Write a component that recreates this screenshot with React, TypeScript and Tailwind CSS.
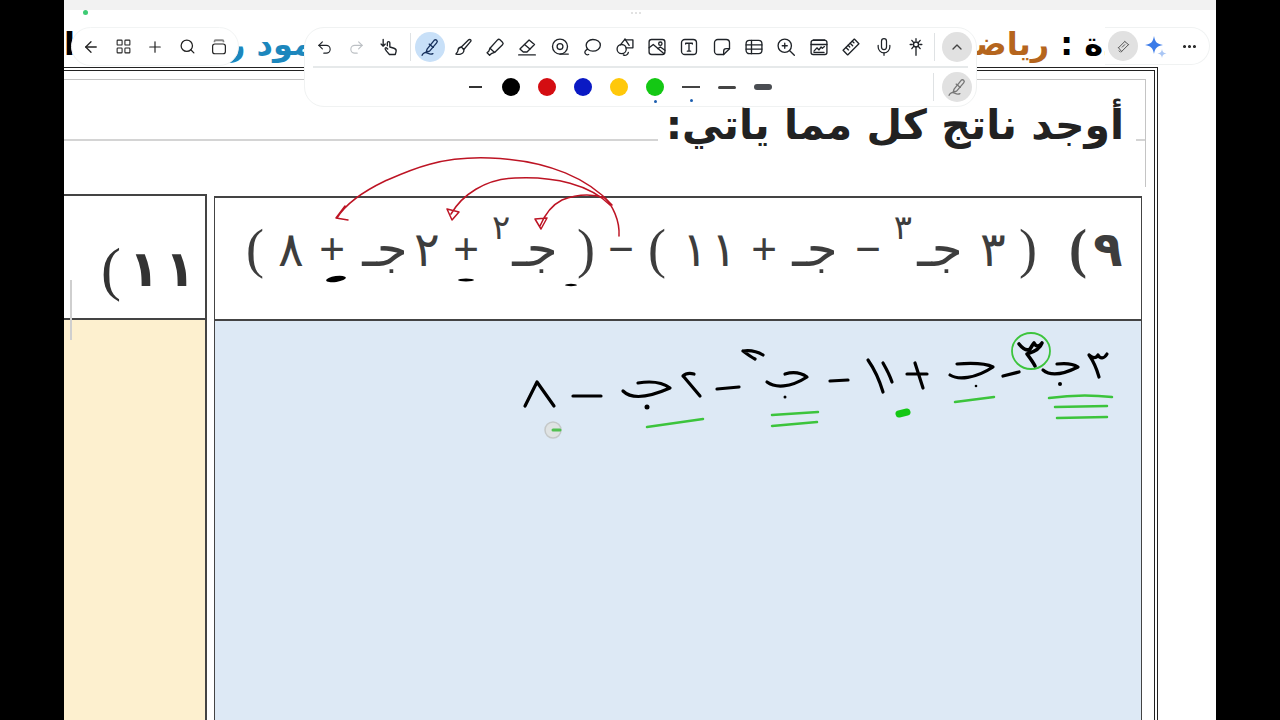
import React from "react";
import { ArrowLeft, ChevronUp, Ellipsis, LayoutGrid, Mic, Plus, Redo2, Search, Undo2 } from "lucide-react";

/**
 * Stroke icon in a 24 box, for the tools that no package has in this shape
 */
const Ico = ({ children, size = 20 }: { children: React.ReactNode; size?: number }) => (
  <svg width={size} height={size} viewBox="0 0 24 24" fill="none" stroke="currentColor" strokeWidth={1.6} strokeLinecap="round" strokeLinejoin="round">
    {children}
  </svg>
);

const PenInk = ({ size = 20 }: { size?: number }) => (
  <Ico size={size}>
    <path d="M8.5 14.5 17 4c1-1 2-1 3 0s1 2 0 3l-8.500 10-4 1z" />
    <path d="M11 8.500l5 4" />
    <path d="M2.500 22c1-3 4-4 6-3s4 2.500 7 1" />
  </Ico>
);

const toolIcons: React.ReactNode[] = [
  <Ico key="brush">
    <path d="M20 3c1 0 2 1 1.500 2L13 15l-3-3 8.500-8.500c.4-.4 1-.5 1.500-.5z" />
    <path d="M10 12c-3 .5-4 2-4 4s-1 3-2.500 4.500c3.500 1 8.500 0 9.300-3 .4-1.500.2-2.500-.3-2.500" />
  </Ico>,
  <Ico key="marker">
    <path d="M15 3.500c1-1 2-1 3-.1l3 2.800c1 1 1 2 0 3L11.500 18.500 6 13.500z" />
    <path d="M6 13.500 4.500 17l-2 2 3 3 2-2 4-1.500" />
  </Ico>,
  <Ico key="eraser">
    <path d="M14.500 3.500 21 9l-9 9H7.500L3.500 14.500z" />
    <path d="M9 9l6.500 5.500" />
    <path d="M2 21.500h20" />
  </Ico>,
  <Ico key="tape">
    <circle cx="12" cy="11.500" r="9" />
    <circle cx="12" cy="11.500" r="3.500" />
    <path d="M12 20.500h10" />
  </Ico>,
  <Ico key="lasso">
    <path d="M13 3c5 0 9 2.800 9 6.800S18 17 13 17c-4.500 0-8-3-8-7s3.500-7 8-7z" />
    <path d="M6.500 14.500C4 16 2.500 18 4 20c1 1.300 3 1.500 4 1" />
  </Ico>,
  <Ico key="shapes">
    <circle cx="8" cy="14.500" r="5.500" />
    <path d="M12 3.500h9.500V13H13" />
    <path d="M12 2.500 6.500 9.500" />
    <path d="M12 2.500l5 7.500" />
    <path d="M16 18.500a4 4 0 0 1-6 3" />
  </Ico>,
  <Ico key="image">
    <rect x="2.500" y="3" width="19" height="18" rx="3" />
    <circle cx="16" cy="8" r="2" />
    <path d="M2.500 13l5-4 13 11" />
    <path d="M13 14l3-2 5.500 4" />
  </Ico>,
  <Ico key="text">
    <rect x="3" y="3" width="18" height="18" rx="4" />
    <path d="M8 8.500V7.500h8v1M12 7.500V17M10 17h4" />
  </Ico>,
  <Ico key="note">
    <path d="M7 3h10a4 4 0 0 1 4 4v7l-7 7H7a4 4 0 0 1-4-4V7a4 4 0 0 1 4-4z" />
    <path d="M14 21v-4a3 3 0 0 1 3-3h4" />
  </Ico>,
  <Ico key="table">
    <rect x="2.500" y="4" width="19" height="16" rx="4" />
    <path d="M2.500 9.500h19M2.500 14.500h19M9 4v16" />
  </Ico>,
  <Ico key="zoom">
    <circle cx="10.500" cy="10.500" r="8" />
    <path d="M16.500 16.500 22 22M10.500 7.500v6M7.500 10.500h6" />
  </Ico>,
  <Ico key="chart">
    <rect x="2.500" y="4" width="19" height="17" rx="2.500" />
    <path d="M2.500 9h19" />
    <path d="M5 3.500h14" />
    <path d="M6 17l3.500-4 2.500 2.500 2.500-3.500 1.500 1.500 2.500-2" />
    <path d="M6 18.500h12" />
  </Ico>,
  <Ico key="ruler">
    <path d="M16 2.500 21.500 8 8 21.500 2.500 16z" />
    <path d="M13.500 5l2 2M11 7.500l3 3M8.500 10l2 2M6 12.500l3 3" />
  </Ico>,
  <Mic key="mic" size={20} strokeWidth={1.5} />,
  <Ico key="wand">
    <circle cx="12" cy="9" r="3" />
    <path d="M12 12v10M12 2v2.500M5 9h2.500M16.500 9H19M7 4l2 2.500M17 4l-2 2.500M7 14l2-2.500M17 14l-2-2.500" />
  </Ico>,
];

const colors = ["bg-black", "bg-[#d40d12]", "bg-[#0a19c4]", "bg-[#ffc80a]", "bg-[#14c814]"];

const paren = "font-['Liberation_Serif',serif] text-[54px]";
const digit = "text-[48px]";
const jeem = "text-[50px]";
const sign = "font-['Liberation_Sans',sans-serif] text-[44px] font-light";
const sup = "-translate-y-[22px] text-[34px]";

const mathCells = [
  { t: "(", w: "w-[36px]", c: paren },
  { t: "٨", w: "w-[36px]", c: digit },
  { t: "+", w: "w-[46px]", c: sign },
  { t: "جـ", w: "w-[60px]", c: jeem },
  { t: "٢", w: "w-[24px]", c: digit },
  { t: "+", w: "w-[54px]", c: sign },
  { t: "٢", w: "w-[16px]", c: sup },
  { t: "جـ", w: "w-[52px]", c: jeem },
  { t: ")", w: "w-[50px]", c: paren },
  { t: "−", w: "w-[20px]", c: sign },
  { t: "(", w: "w-[52px]", c: paren },
  { t: "١", w: "w-[24px]", c: digit },
  { t: "١", w: "w-[34px]", c: digit },
  { t: "+", w: "w-[46px]", c: sign },
  { t: "جـ", w: "w-[56px]", c: jeem },
  { t: "−", w: "w-[50px]", c: sign },
  { t: "٣", w: "w-[20px]", c: sup },
  { t: "جـ", w: "w-[54px]", c: jeem },
  { t: "٣", w: "w-[52px]", c: digit },
  { t: ")", w: "w-[18px]", c: paren },
  { t: "(", w: "ml-[23px] w-[36px]", c: `${paren} font-bold` },
  { t: "٩", w: "w-[24px]", c: `${digit} font-bold` },
];

// pen strokes written over the sheet, in page coordinates
const blackInk = [
  "M525 406 537 382 554 406",
  "M573 396H601",
  "M623 391C630 398 645 399 670 388C662 382 650 381 638 383",
  "M683 376C686 373 690 373 694 374M684 377 700 396",
  "M717 389 739 387",
  "M743 351C750 350 758 352 763 355M743 351C747 354 751 357 755 359",
  "M767 382C775 388 790 388 807 377C800 372 792 372 785 374",
  "M830 381 848 380",
  "M868 360C875 370 880 382 883 392M883 363C887 370 890 376 892 382",
  "M907 374H927M915 363 923 388",
  "M950 375C958 380 975 379 993 367C985 363 970 363 957 364",
  "M1003 376 1019 372",
  "M1043 370C1050 376 1062 375 1078 367C1072 363 1065 363 1057 364",
  "M1089 355C1092 358 1096 359 1098 355C1100 359 1104 359 1107 354M1089 355C1094 362 1097 370 1099 377",
];

const greenInk = [
  "M647 427 703 419",
  "M772 415 818 412",
  "M772 426 817 422",
  "M955 402 994 397",
  "M1049 398C1070 395 1095 395 1112 397",
  "M1055 407 1107 406",
  "M1057 418 1107 417",
];

const redInk = [
  "M612 205C590 180 550 160 490 158C440 156 410 170 385 181C360 193 345 205 337 218M345 206 336 218 348 220",
  "M610 205C590 185 555 176 515 178C485 179 462 195 451 214M447 209 452 220 459 212 447 209",
  "M619 236C620 220 612 205 605 198C590 193 575 195 562 200C552 205 545 214 540 226M535 219 541 229 547 218 535 219",
];

const HandInk = () => (
  <svg className="pointer-events-none absolute left-0 top-0" width={1152} height={720} viewBox="64 0 1152 720" fill="none" strokeLinecap="round" strokeLinejoin="round">
    <g stroke="#bd1424" strokeWidth={1.5}>
      {redInk.map((d) => <path key={d} d={d} />)}
    </g>
    <g stroke="#000" strokeWidth={3.2}>
      {blackInk.map((d) => <path key={d} d={d} />)}
      <path d="M1019 344C1023 349 1027 351 1030 349C1032 346 1033 344 1034 343C1036 347 1039 347 1042 343C1040 349 1034 352 1027 354C1030 358 1033 362 1035 366" strokeWidth={3.6} />
    </g>
    <g fill="#000" stroke="none">
      <circle cx={647} cy={407} r={2.5} />
      <circle cx={785} cy={397} r={1.5} />
      <circle cx={976} cy={386} r={1.3} />
      <circle cx={1060} cy={384} r={2} />
      <ellipse cx={336} cy={279} rx={10} ry={3} transform="rotate(-8 336 279)" />
      <ellipse cx={466} cy={280} rx={8} ry={1.5} />
      <ellipse cx={571} cy={285} rx={6} ry={1.2} />
    </g>
    <g stroke="#3cc43c" strokeWidth={2.5}>
      {greenInk.map((d) => <path key={d} d={d} />)}
      <ellipse cx={1031} cy={351} rx={19} ry={18} strokeWidth={1.8} />
      <path d="M899 414 907 412" strokeWidth={7} stroke="#14c814" />
    </g>
    <circle cx={553} cy={430} r={8} fill="#dfe3e3" stroke="#c4c8c8" strokeWidth={1.5} />
    <path d="M553 430H560" stroke="#52c052" strokeWidth={3} />
  </svg>
);

/**
 * The floating pen toolbar, it lies over the sheet
 */
const PenToolbar = () => (
  <div className="absolute left-[240px] top-[27px] flex h-[80px] w-[673px] flex-col rounded-[20px] border border-[#f0f2f2] bg-white text-[#1f2328]">
    <div className="flex h-[38px] items-center pl-[3px]">
      <div className="flex w-[32px] justify-center"><Undo2 size={17} strokeWidth={1.6} /></div>
      <div className="flex w-[32px] justify-center text-[#bcc0c4]"><Redo2 size={17} strokeWidth={1.6} /></div>
      <div className="flex w-[34px] justify-center">
        <Ico>
          <path d="M10 10.500V7a1.500 1.500 0 0 1 3 0v5l5 1.500c2 .7 3 2 2.500 4l-1 3.500h-7L9 17l-1.500-2.500c-.5-1.500 1-2 2-1l1 1" />
          <path d="M5 3v8M2.500 8.500 5 11l2.500-2.500" />
        </Ico>
      </div>
      <div className="ml-[4px] mr-[3px] h-[28px] w-px bg-[#dfe2e4]" />
      <div className="flex w-[32.400px] justify-center">
        <div className="flex h-[30px] w-[30px] items-center justify-center rounded-full bg-[#c8e0f8] text-[#17305c]"><PenInk /></div>
      </div>
      {toolIcons.map((icon, i) => (
        <div key={i} className="flex w-[32.400px] justify-center">{icon}</div>
      ))}
      <div className="ml-[2px] mr-[7px] h-[28px] w-px bg-[#dfe2e4]" />
      <div className="flex h-[30px] w-[30px] items-center justify-center rounded-full bg-[#e1e1e1] text-[#444]"><ChevronUp size={16} strokeWidth={2} /></div>
    </div>
    <div className="mx-[8px] h-[2px] bg-[#e6e9ea]" />
    <div className="flex flex-1 items-center pl-[152px]">
      <div className="flex w-[36px] justify-center"><div className="h-[2px] w-[13px] bg-[#333]" /></div>
      {colors.map((c, i) => (
        <div key={c} className="relative flex w-[36px] justify-center">
          <div className={`h-[18px] w-[18px] rounded-full ${c}`} />
          {i === 4 && <div className="absolute left-[17px] top-[22px] h-[3px] w-[3px] rounded-full bg-[#1d5fb0]" />}
        </div>
      ))}
      <div className="relative flex w-[36px] justify-center">
        <div className="h-[1.500px] w-[18px] bg-[#444]" />
        <div className="absolute left-[17px] top-[13px] h-[3px] w-[3px] rounded-full bg-[#1d5fb0]" />
      </div>
      <div className="flex w-[36px] justify-center"><div className="h-[3px] w-[18px] rounded-full bg-[#444]" /></div>
      <div className="flex w-[36px] justify-center"><div className="h-[6px] w-[18px] rounded-full bg-[#4a4d52]" /></div>
      <div className="ml-[152px] h-[28px] w-px bg-[#dfe2e4]" />
      <div className="ml-[8px] flex h-[30px] w-[30px] items-center justify-center rounded-full bg-[#e1e1e1] text-[#777]"><PenInk /></div>
    </div>
  </div>
);

export default function App() {
  return (
    <div className="flex h-[720px] w-[1280px] justify-center overflow-hidden bg-black font-['DejaVu_Sans',sans-serif]">
      <div className="relative flex h-full w-[1152px] flex-col bg-white">
        <div className="h-[10px] bg-[#f2f2f2]" />
        {/* Sheet heading, mostly under the toolbars */}
        <div className="flex h-[57px] items-end overflow-hidden pb-[1px] text-[32px] font-bold leading-[44px]">
          <span className="text-black">ا</span>
          <span dir="rtl" className="ml-[152px] whitespace-nowrap text-[#1c87bd]">محمود ر</span>
          <div className="flex-1" />
          <span dir="rtl" className="mr-[40px] whitespace-nowrap text-black">
            المادة : <span className="text-[#b5651d]">رياضيات</span>
          </span>
        </div>

        {/* Double frame of the page */}
        <div className="flex w-[1094px] flex-1 flex-col border-r-4 border-t-4 border-double border-[#222]">
          <div className="mr-[8px] mt-[8px] flex h-[108px] items-start border-r border-t border-[#c4c4c4]">
            <div className="mt-[59px] h-[2px] flex-1 bg-[#d4d4d4]" />
            <h1 dir="rtl" className="mt-[18px] whitespace-nowrap pl-[8px] pr-[12px] text-[41px] font-bold leading-[54px] text-[#222]">أوجد ناتج كل مما يأتي:</h1>
            <div className="mt-[59px] h-[2px] w-[9px] bg-[#d4d4d4]" />
          </div>

          <div className="mt-[7px] flex flex-1">
            {/* Exercise 11, cut by the page edge */}
            <div className="flex w-[143px] flex-col">
              <div className="flex h-[124px] items-center border-r-2 border-t-2 border-[#444] pl-[36px] pt-[24px] text-[50px] font-bold leading-none text-[#333]">
                <span className="flex w-[22px] justify-center font-['Liberation_Serif',serif] text-[60px] font-normal">(</span>
                <span className="ml-[10px] flex w-[24px] justify-center">١</span>
                <span className="ml-[12px] flex w-[24px] justify-center">١</span>
              </div>
              <div className="flex-1 border-r-2 border-t-2 border-[#444] bg-[#fdf0cf]" />
            </div>
            {/* Exercise 9 */}
            <div className="ml-[7px] mt-[2px] flex w-[928px] flex-col border-x border-[#444]">
              <div className="flex h-[123px] items-start border-t-2 border-[#444] pl-[22px] pt-[26px] leading-[50px] text-[#3d3d3d]">
                {mathCells.map((m, i) => (
                  <span key={i} className={`flex justify-center ${m.w} ${m.c}`}>{m.t}</span>
                ))}
              </div>
              <div className="flex-1 border-t-2 border-[#444] bg-[#dde9f5]" />
            </div>
          </div>
        </div>

        <div className="absolute left-[6px] top-[280px] h-[60px] w-[2px] bg-[#cfcfcf]" />
        <HandInk />

        {/* App chrome over the sheet */}
        <div className="absolute left-[19px] top-[10px] h-[5px] w-[5px] rounded-full bg-[#3ecb74]" />
        <div className="absolute left-[567px] top-[12px] flex gap-[2px]">
          <div className="h-[2px] w-[2px] rounded-full bg-[#d8d8d8]" />
          <div className="h-[2px] w-[2px] rounded-full bg-[#d8d8d8]" />
          <div className="h-[2px] w-[2px] rounded-full bg-[#d8d8d8]" />
        </div>
        <div className="absolute left-[7px] top-[27px] flex h-[39px] w-[168px] items-center rounded-full border border-[#f2f4f4] bg-white pl-[3px] text-[#222]">
          <div className="flex w-[32px] justify-center"><ArrowLeft size={18} strokeWidth={1.7} /></div>
          <div className="flex w-[32px] justify-center"><LayoutGrid size={17} strokeWidth={1.5} /></div>
          <div className="flex w-[32px] justify-center"><Plus size={18} strokeWidth={1.6} /></div>
          <div className="flex w-[32px] justify-center"><Search size={17} strokeWidth={1.8} /></div>
          <div className="flex w-[32px] justify-center">
            <Ico size={18}>
              <rect x="3.500" y="8" width="17" height="13" rx="3" />
              <path d="M6 4.500c0-1 .6-1.500 1.500-1.500h9c.9 0 1.500.5 1.500 1.500" stroke="#888" strokeWidth={2.4} />
            </Ico>
          </div>
        </div>
        <PenToolbar />
        <div className="absolute left-[1041px] top-[27px] flex h-[38px] w-[105px] items-center rounded-r-full border-y border-r border-[#f0f2f2] bg-white pl-[3px]">
          <div className="flex h-[30px] w-[30px] items-center justify-center rounded-full bg-[#e1e1e1] text-[#555]">
            <Ico size={15}>
              <path d="M4 14 14 4M9 20 20 9M4 14l5 6M14 4l6 5M10 13l4-4M5 19l2 2" />
            </Ico>
          </div>
          <svg className="ml-[6px]" width={24} height={24} viewBox="0 0 24 24">
            <path d="M10 2C11 8 13 10 19 11 13 12 11 14 10 20 9 14 7 12 1 11 7 10 9 8 10 2z" fill="#3b7be8" />
            <path d="M18 15C18.500 18 19.500 19 22.500 19.500 19.500 20 18.500 21 18 24 17.500 21 16.500 20 13.500 19.500 16.500 19 17.500 18 18 15z" fill="#a9c6f5" />
          </svg>
          <div className="ml-[13px] text-[#222]"><Ellipsis size={17} strokeWidth={2.4} /></div>
        </div>
      </div>
    </div>
  );
}
